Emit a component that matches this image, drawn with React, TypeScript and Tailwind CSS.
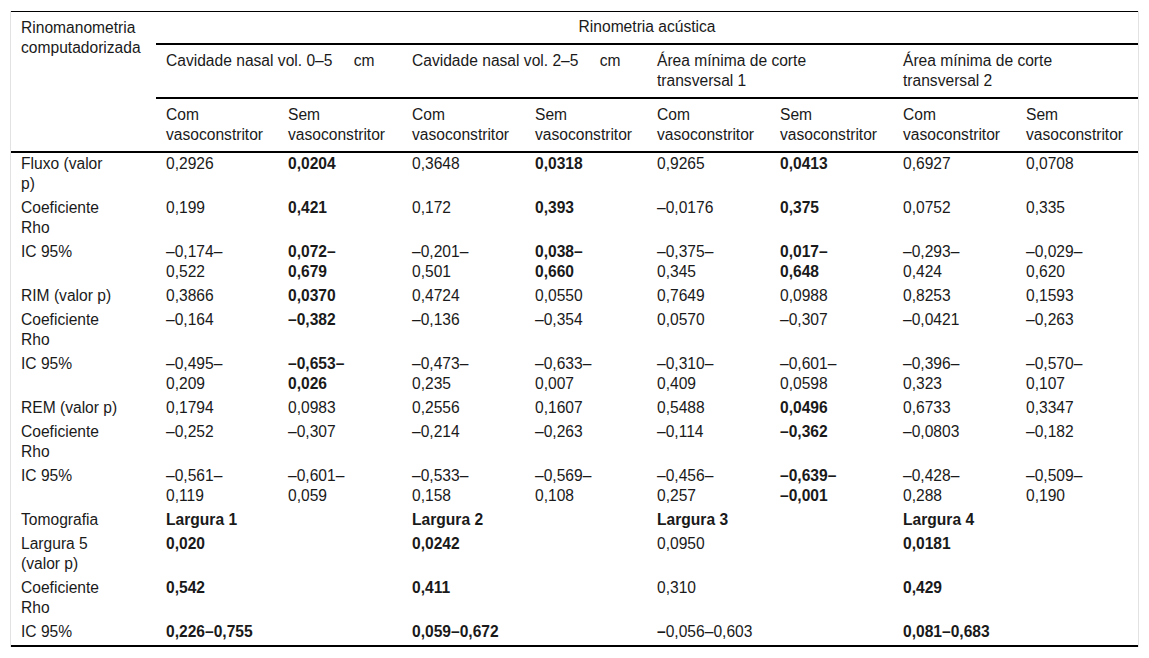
import React from "react";

type Cell = { t: React.ReactNode; b?: boolean };

const c = (t: React.ReactNode, b = false): Cell => ({ t, b });

const br = (a: string, b: string) => (
  <>
    {a}
    <br />
    {b}
  </>
);

const rows: { label: React.ReactNode; cells: (Cell | null)[] }[] = [
  { label: br("Fluxo (valor", "p)"), cells: [c("0,2926"), c("0,0204", true), c("0,3648"), c("0,0318", true), c("0,9265"), c("0,0413", true), c("0,6927"), c("0,0708")] },
  { label: br("Coeficiente", "Rho"), cells: [c("0,199"), c("0,421", true), c("0,172"), c("0,393", true), c("\u20130,0176"), c("0,375", true), c("0,0752"), c("0,335")] },
  { label: "IC 95%", cells: [c(br("\u20130,174\u2013", "0,522")), c(br("0,072\u2013", "0,679"), true), c(br("\u20130,201\u2013", "0,501")), c(br("0,038\u2013", "0,660"), true), c(br("\u20130,375\u2013", "0,345")), c(br("0,017\u2013", "0,648"), true), c(br("\u20130,293\u2013", "0,424")), c(br("\u20130,029\u2013", "0,620"))] },
  { label: "RIM (valor p)", cells: [c("0,3866"), c("0,0370", true), c("0,4724"), c("0,0550"), c("0,7649"), c("0,0988"), c("0,8253"), c("0,1593")] },
  { label: br("Coeficiente", "Rho"), cells: [c("\u20130,164"), c("\u20130,382", true), c("\u20130,136"), c("\u20130,354"), c("0,0570"), c("\u20130,307"), c("\u20130,0421"), c("\u20130,263")] },
  { label: "IC 95%", cells: [c(br("\u20130,495\u2013", "0,209")), c(br("\u20130,653\u2013", "0,026"), true), c(br("\u20130,473\u2013", "0,235")), c(br("\u20130,633\u2013", "0,007")), c(br("\u20130,310\u2013", "0,409")), c(br("\u20130,601\u2013", "0,0598")), c(br("\u20130,396\u2013", "0,323")), c(br("\u20130,570\u2013", "0,107"))] },
  { label: "REM (valor p)", cells: [c("0,1794"), c("0,0983"), c("0,2556"), c("0,1607"), c("0,5488"), c("0,0496", true), c("0,6733"), c("0,3347")] },
  { label: br("Coeficiente", "Rho"), cells: [c("\u20130,252"), c("\u20130,307"), c("\u20130,214"), c("\u20130,263"), c("\u20130,114"), c("\u20130,362", true), c("\u20130,0803"), c("\u20130,182")] },
  { label: "IC 95%", cells: [c(br("\u20130,561\u2013", "0,119")), c(br("\u20130,601\u2013", "0,059")), c(br("\u20130,533\u2013", "0,158")), c(br("\u20130,569\u2013", "0,108")), c(br("\u20130,456\u2013", "0,257")), c(br("\u20130,639\u2013", "\u20130,001"), true), c(br("\u20130,428\u2013", "0,288")), c(br("\u20130,509\u2013", "0,190"))] },
  { label: "Tomografia", cells: [c("Largura 1", true), null, c("Largura 2", true), null, c("Largura 3", true), null, c("Largura 4", true), null] },
  { label: br("Largura 5", "(valor p)"), cells: [c("0,020", true), null, c("0,0242", true), null, c("0,0950"), null, c("0,0181", true), null] },
  { label: br("Coeficiente", "Rho"), cells: [c("0,542", true), null, c("0,411", true), null, c("0,310"), null, c("0,429", true), null] },
  {
    label: "IC 95%",
    cells: [
      c("0,226\u20130,755", true),
      null,
      c("0,059\u20130,672", true),
      null,
      c(
        <>
          <span className="font-bold">{"\u2013"}</span>
          {"0,056\u20130,603"}
        </>
      ),
      null,
      c("0,081\u20130,683", true),
      null,
    ],
  },
];

const th = "text-left align-top font-normal pl-[10px] pr-[2px] pt-[6px] pb-[6px] whitespace-nowrap border-b-2 border-black";
const td = "align-top pl-[10px] pr-[2px] pt-px pb-[3px] whitespace-nowrap";

export default function App() {
  return (
    <div className="min-h-[658px] w-[1149px] bg-white pt-[11px] pl-[10px]">
      <div
        className="w-[1129px] border-l border-r border-[#e2e2e2] text-[15.6px] leading-[20px] text-[#1a1a1a]"
        style={{ fontFamily: '"Liberation Sans", Arial, Helvetica, sans-serif' }}
      >
        <table className="w-[1127px] table-fixed border-collapse border-t border-b-2 border-black">
          <colgroup>
            <col className="w-[145px]" />
            <col className="w-[122px]" />
            <col className="w-[124px]" />
            <col className="w-[123px]" />
            <col className="w-[122px]" />
            <col className="w-[123px]" />
            <col className="w-[123px]" />
            <col className="w-[123px]" />
            <col className="w-[122px]" />
          </colgroup>
          <thead>
            <tr>
              <th rowSpan={3} className={th}>
                Rinomanometria
                <br />
                computadorizada
              </th>
              <th colSpan={8} className="text-center align-top font-normal pt-[5px] pb-[6px] border-b-2 border-black">
                Rinometria acústica
              </th>
            </tr>
            <tr>
              <th colSpan={2} className={th}>
                Cavidade nasal vol. 0–5<span className="inline-block w-[17px]"></span> cm
              </th>
              <th colSpan={2} className={th}>
                Cavidade nasal vol. 2–5<span className="inline-block w-[17px]"></span> cm
              </th>
              <th colSpan={2} className={th}>
                Área mínima de corte
                <br />
                transversal 1
              </th>
              <th colSpan={2} className={th}>
                Área mínima de corte
                <br />
                transversal 2
              </th>
            </tr>
            <tr>
              {[0, 1, 2, 3].map((i) => (
                <React.Fragment key={i}>
                  <th className={th}>
                    Com
                    <br />
                    vasoconstritor
                  </th>
                  <th className={th}>
                    Sem
                    <br />
                    vasoconstritor
                  </th>
                </React.Fragment>
              ))}
            </tr>
          </thead>
          <tbody>
            {rows.map((r, ri) => (
              <tr key={ri}>
                <td className={td}>{r.label}</td>
                {r.cells.map((cell, ci) =>
                  cell ? (
                    <td key={ci} className={td + (cell.b ? " font-bold" : "")}>
                      {cell.t}
                    </td>
                  ) : (
                    <td key={ci} className={td}></td>
                  )
                )}
              </tr>
            ))}
          </tbody>
        </table>
      </div>
    </div>
  );
}
